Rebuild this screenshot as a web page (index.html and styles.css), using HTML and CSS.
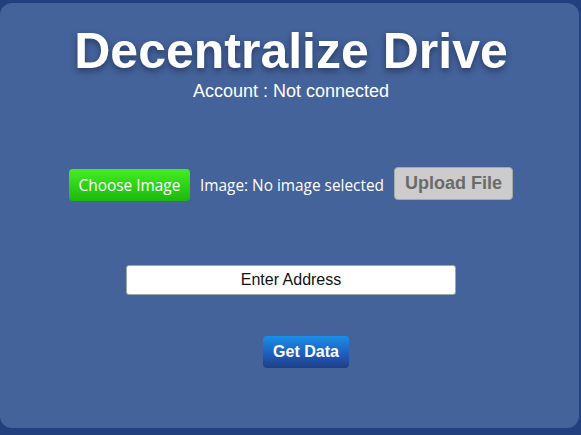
FILE: index.html
```html
<!DOCTYPE html>
<html>
<head>
<meta charset="utf-8">
<link rel="stylesheet" href="styles.css">
</head>
<body>
<div class="card">
  <h1 class="title">Decentralize Drive</h1>
  <p class="account">Account : Not connected</p>
  <div class="upload-row">
    <label class="choose">Choose Image</label>
    <span class="file-name">Image: No image selected</span>
    <button class="upload" disabled>Upload File</button>
  </div>
  <input class="address" type="text" placeholder="Enter Address">
  <div class="get-wrap">
    <button class="get">Get Data</button>
  </div>
</div>
</body>
</html>
```

FILE: styles.css
```css
html, body {
  margin: 0;
  padding: 0;
}
body {
  background: #22407d;
  width: 581px;
  height: 435px;
  overflow: hidden;
  font-family: "Liberation Sans", Arial, sans-serif;
}
.card {
  margin-top: 3px;
  width: 579px;
  height: 425px;
  background: #44639a;
  border-radius: 12px;
  display: flex;
  flex-direction: column;
  align-items: center;
  box-sizing: border-box;
  padding-top: 23px;
  padding-left: 3px;
}
.title {
  margin: 0;
  font-size: 50px;
  line-height: 50px;
  font-weight: bold;
  color: #fff;
  text-shadow: 0 3px 6px rgba(20, 30, 60, 0.6);
}
.account {
  margin: 5px 0 0;
  font-size: 18px;
  line-height: 20px;
  color: #fff;
}
.upload-row {
  margin-top: 68px;
  display: flex;
  align-items: center;
  gap: 10px;
}
.choose {
  width: 121px;
  height: 32px;
  box-sizing: border-box;
  display: flex;
  align-items: center;
  justify-content: center;
  background: linear-gradient(#44ee22, #1cb80e);
  border-radius: 4px;
  color: #fff;
  font-family: "Open Sans", sans-serif;
  font-size: 15.4px;
}
.file-name {
  color: #fff;
  font-family: "Open Sans", sans-serif;
  font-size: 15.4px;
}
.upload {
  width: 119px;
  height: 33px;
  margin-top: -3px;
  background: #cccccc;
  border: 1px solid #a9a9a9;
  border-radius: 4px;
  color: #6b6b6b;
  font-family: "Liberation Sans", Arial, sans-serif;
  font-weight: bold;
  font-size: 18px;
  padding: 0;
}
.address {
  margin-top: 64px;
  width: 330px;
  height: 30px;
  box-sizing: border-box;
  border: 1px solid #9aa;
  border-radius: 3px;
  background: #fff;
  text-align: center;
  font-family: "Liberation Sans", Arial, sans-serif;
  font-size: 16px;
  padding: 0;
}
.address::placeholder {
  color: #111;
}
.get-wrap {
  margin-top: 41px;
  padding-left: 30px;
}
.get {
  width: 86px;
  height: 32px;
  border: none;
  border-radius: 4px;
  background: linear-gradient(#1a90ea, #1f59b8 60%, #1f3f86);
  color: #fff;
  font-family: "Liberation Sans", Arial, sans-serif;
  font-weight: bold;
  font-size: 16px;
  padding: 0;
}
```
